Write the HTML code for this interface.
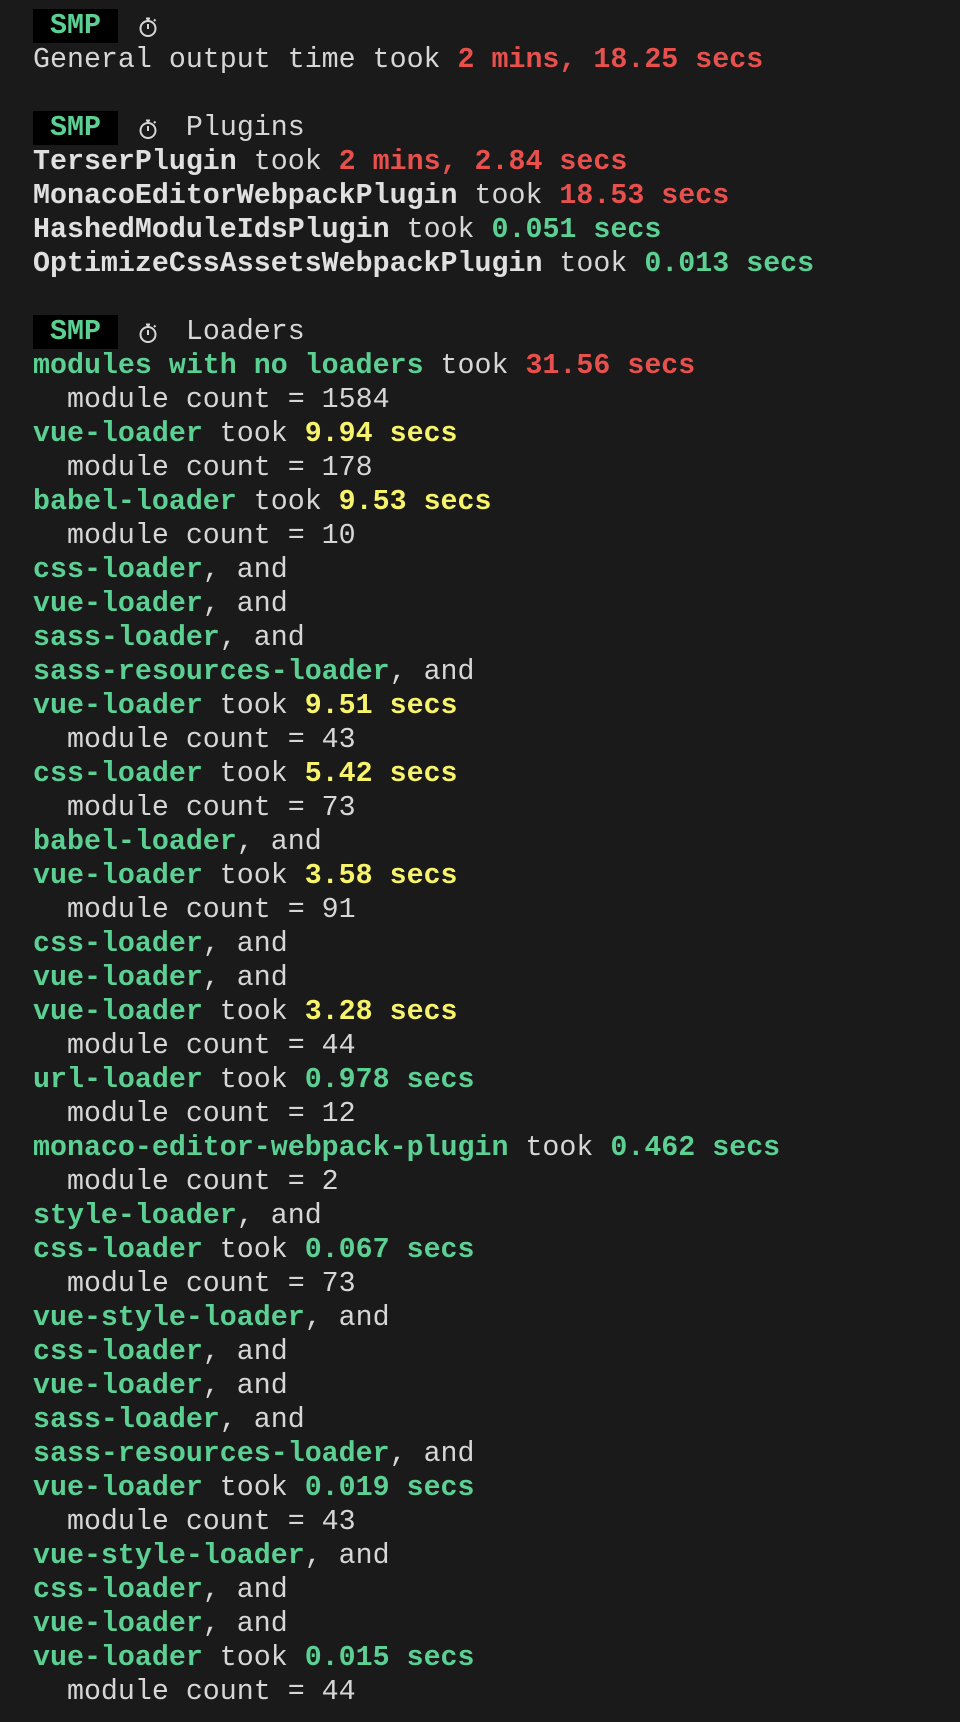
<!DOCTYPE html>
<html><head><meta charset="utf-8"><style>
html,body{margin:0;padding:0;background:#1a1a1a;width:960px;height:1722px;overflow:hidden}
pre{margin:0;padding:9px 0 0 33px;font-family:"Liberation Mono","DejaVu Sans Mono",monospace;font-size:28.3px;line-height:34px;color:#d6d6d6;white-space:pre}
b{font-weight:bold}
.g{color:#5ccf93;font-weight:bold}.r{color:#e8504e;font-weight:bold}.y{color:#f7f36a;font-weight:bold}.w{color:#e0e0e0;font-weight:bold}
.smp{background:#000;color:#5ccf93;font-weight:bold;display:inline-block;height:34px}
.clk{display:inline-block;width:34px;height:34px;vertical-align:top;position:relative}
.clk svg{position:absolute;left:2px;top:7px}
</style></head><body><pre><span class="smp"> SMP </span> <span class="clk"><svg width="22" height="22" viewBox="0 0 22 22" fill="none" stroke="#d6d6d6" stroke-width="2"><circle cx="11" cy="12.5" r="7.5"/><path d="M9 2.5h4M11 3v2M11 8v5M17 5l1.5-1.5"/></svg></span>
General output time took <span class="r">2 mins, 18.25 secs</span>

<span class="smp"> SMP </span> <span class="clk"><svg width="22" height="22" viewBox="0 0 22 22" fill="none" stroke="#d6d6d6" stroke-width="2"><circle cx="11" cy="12.5" r="7.5"/><path d="M9 2.5h4M11 3v2M11 8v5M17 5l1.5-1.5"/></svg></span> Plugins
<span class="w">TerserPlugin</span> took <span class="r">2 mins, 2.84 secs</span>
<span class="w">MonacoEditorWebpackPlugin</span> took <span class="r">18.53 secs</span>
<span class="w">HashedModuleIdsPlugin</span> took <span class="g">0.051 secs</span>
<span class="w">OptimizeCssAssetsWebpackPlugin</span> took <span class="g">0.013 secs</span>

<span class="smp"> SMP </span> <span class="clk"><svg width="22" height="22" viewBox="0 0 22 22" fill="none" stroke="#d6d6d6" stroke-width="2"><circle cx="11" cy="12.5" r="7.5"/><path d="M9 2.5h4M11 3v2M11 8v5M17 5l1.5-1.5"/></svg></span> Loaders
<span class="g">modules with no loaders</span> took <span class="r">31.56 secs</span>
  module count = 1584
<span class="g">vue-loader</span> took <span class="y">9.94 secs</span>
  module count = 178
<span class="g">babel-loader</span> took <span class="y">9.53 secs</span>
  module count = 10
<span class="g">css-loader</span>, and
<span class="g">vue-loader</span>, and
<span class="g">sass-loader</span>, and
<span class="g">sass-resources-loader</span>, and
<span class="g">vue-loader</span> took <span class="y">9.51 secs</span>
  module count = 43
<span class="g">css-loader</span> took <span class="y">5.42 secs</span>
  module count = 73
<span class="g">babel-loader</span>, and
<span class="g">vue-loader</span> took <span class="y">3.58 secs</span>
  module count = 91
<span class="g">css-loader</span>, and
<span class="g">vue-loader</span>, and
<span class="g">vue-loader</span> took <span class="y">3.28 secs</span>
  module count = 44
<span class="g">url-loader</span> took <span class="g">0.978 secs</span>
  module count = 12
<span class="g">monaco-editor-webpack-plugin</span> took <span class="g">0.462 secs</span>
  module count = 2
<span class="g">style-loader</span>, and
<span class="g">css-loader</span> took <span class="g">0.067 secs</span>
  module count = 73
<span class="g">vue-style-loader</span>, and
<span class="g">css-loader</span>, and
<span class="g">vue-loader</span>, and
<span class="g">sass-loader</span>, and
<span class="g">sass-resources-loader</span>, and
<span class="g">vue-loader</span> took <span class="g">0.019 secs</span>
  module count = 43
<span class="g">vue-style-loader</span>, and
<span class="g">css-loader</span>, and
<span class="g">vue-loader</span>, and
<span class="g">vue-loader</span> took <span class="g">0.015 secs</span>
  module count = 44</pre></body></html>
